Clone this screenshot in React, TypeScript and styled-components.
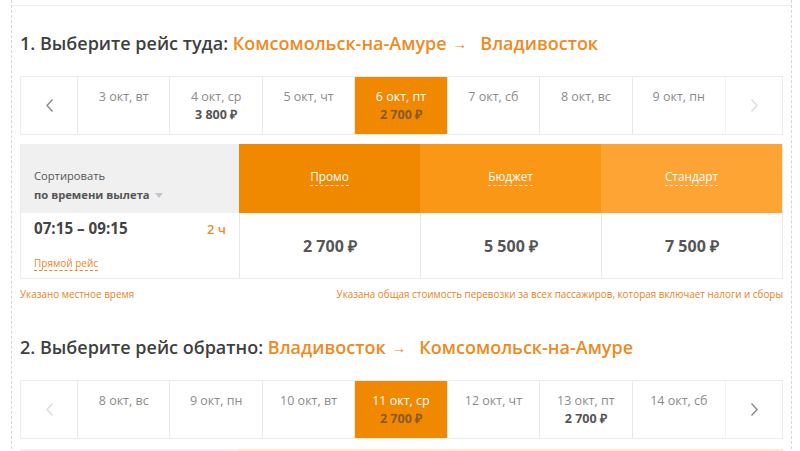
import React from 'react';
import styled, { createGlobalStyle } from 'styled-components';

const GlobalStyle = createGlobalStyle`
  body {
    margin: 0;
    background: #fff;
    font-family: "Open Sans", "Liberation Sans", sans-serif;
    color: #444;
  }
`;

// Page frame with dotted side rules
const Page = styled.div`
  box-sizing: border-box;
  margin-left: 11px;
  width: 781px;
  min-height: 451px;
  padding: 5px 8px 0;
  border-left: 1px dashed #d6d6d6;
  border-right: 1px dashed #d6d6d6;
`;

const Rule = styled.div`
  margin: 0 -8px;
  border-top: 1px solid #ececec;
`;

const Section = styled.section<{ $top: number }>`
  margin-top: ${(p) => p.$top}px;
`;

const Heading = styled.h2`
  margin: 0 0 19px;
  font-size: 18px;
  line-height: 28px;
  font-weight: 600;
  color: #3f3f3f;
  white-space: nowrap;
`;

const Route = styled.span`
  color: #ef8a1f;
`;

const Arrow = styled.span`
  display: inline-block;
  margin: 0 13px 0 1px;
  font-size: 15px;
  font-weight: 700;
  vertical-align: 1px;
`;

// Date strip
const Strip = styled.div`
  display: grid;
  grid-template-columns: 57px repeat(7, 1fr) 57px;
  height: 59px;
  box-sizing: border-box;
  border: 1px solid #ececec;
`;

const NavCell = styled.div<{ $disabled?: boolean; $side: 'left' | 'right' }>`
  display: flex;
  align-items: center;
  justify-content: center;
  color: ${(p) => (p.$disabled ? '#dcdcdc' : '#8a8a8a')};
  ${(p) => (p.$side === 'left' ? 'border-right: 1px solid #e8e8e8;' : 'border-left: 1px solid #f3f3f3;')}
`;

const DateCell = styled.div<{ $active?: boolean }>`
  box-sizing: border-box;
  padding-top: 11px;
  text-align: center;
  background: ${(p) => (p.$active ? '#f08800' : '#fff')};
  border-right: 1px solid #e8e8e8;
  &:nth-child(8) {
    border-right: none;
  }
`;

const DateLabel = styled.div<{ $active?: boolean }>`
  font-size: 12.5px;
  line-height: 18px;
  color: ${(p) => (p.$active ? '#fff' : '#8c8c8c')};
`;

const DatePrice = styled.div<{ $active?: boolean }>`
  font-size: 12.5px;
  line-height: 18px;
  font-weight: 700;
  color: ${(p) => (p.$active ? '#8a5a2c' : '#555')};
`;

// Fares table
const Table = styled.div`
  margin-top: 9px;
  display: grid;
  grid-template-columns: 218px repeat(3, 1fr);
  grid-template-rows: 69px 65px;
  border: 1px solid #ececec;
  border-top: none;
`;

const SortHead = styled.div`
  background: #f0f0f0;
  padding: 22px 0 0 13px;
  font-size: 11.2px;
  line-height: 19px;
  color: #555;
`;

const SortValue = styled.div`
  font-weight: 700;
  display: flex;
  align-items: center;
  gap: 5px;
`;

const Caret = styled.span`
  width: 0;
  height: 0;
  border-left: 4px solid transparent;
  border-right: 4px solid transparent;
  border-top: 5px solid #c4c4c4;
  margin-top: 2px;
`;

const FareHead = styled.div<{ $bg: string }>`
  display: flex;
  align-items: center;
  justify-content: center;
  padding-bottom: 3px;
  background: ${(p) => p.$bg};
`;

const FareName = styled.span`
  color: #fff;
  font-size: 11.8px;
  line-height: 17px;
  border-bottom: 1px dashed rgba(255, 255, 255, 0.8);
`;

const FlightCell = styled.div`
  padding: 3px 13px 0;
  display: flex;
  flex-direction: column;
  background: #fff;
`;

const TimeRow = styled.div`
  display: flex;
  justify-content: space-between;
  align-items: baseline;
`;

const Times = styled.span`
  font-size: 15.2px;
  line-height: 24px;
  font-weight: 700;
  color: #444;
`;

const Duration = styled.span`
  font-size: 13px;
  font-weight: 600;
  color: #ef8a1f;
`;

const Direct = styled.span`
  align-self: flex-start;
  margin-top: 17px;
  font-size: 10px;
  line-height: 13px;
  color: #ee8524;
  border-bottom: 1px dashed #ee8524;
`;

const PriceCell = styled.div`
  display: flex;
  align-items: center;
  justify-content: center;
  border-left: 1px solid #e8e8e8;
  font-size: 16px;
  font-weight: 700;
  color: #555;
`;

const Notes = styled.div`
  display: flex;
  justify-content: space-between;
  padding-top: 8px;
  font-size: 9.9px;
  line-height: 15px;
  color: #ea8226;
`;

const NextTable = styled.div`
  margin-top: 10px;
  display: grid;
  grid-template-columns: 218px 1fr;
  height: 10px;
`;

const Block = styled.div<{ $bg: string }>`
  background: ${(p) => p.$bg};
`;

const Chevron = ({ dir }: { dir: 'left' | 'right' }) => (
  <svg width="9" height="15" viewBox="0 0 9 15" fill="none">
    <path
      d={dir === 'left' ? 'M7.5 1.5 L2 7.5 L7.5 13.5' : 'M1.5 1.5 L7 7.5 L1.5 13.5'}
      stroke="currentColor"
      strokeWidth="1.4"
    />
  </svg>
);

type Day = { label: string; price?: string; active?: boolean };

const DateStrip = ({ days, leftOff, rightOff }: { days: Day[]; leftOff?: boolean; rightOff?: boolean }) => (
  <Strip>
    <NavCell $side="left" $disabled={leftOff}>
      <Chevron dir="left" />
    </NavCell>
    {days.map((d) => (
      <DateCell key={d.label} $active={d.active}>
        <DateLabel $active={d.active}>{d.label}</DateLabel>
        {d.price && <DatePrice $active={d.active}>{d.price}</DatePrice>}
      </DateCell>
    ))}
    <NavCell $side="right" $disabled={rightOff}>
      <Chevron dir="right" />
    </NavCell>
  </Strip>
);

const outbound: Day[] = [
  { label: '3 окт, вт' },
  { label: '4 окт, ср', price: '3 800 ₽' },
  { label: '5 окт, чт' },
  { label: '6 окт, пт', price: '2 700 ₽', active: true },
  { label: '7 окт, сб' },
  { label: '8 окт, вс' },
  { label: '9 окт, пн' },
];

const inbound: Day[] = [
  { label: '8 окт, вс' },
  { label: '9 окт, пн' },
  { label: '10 окт, вт' },
  { label: '11 окт, ср', price: '2 700 ₽', active: true },
  { label: '12 окт, чт' },
  { label: '13 окт, пт', price: '2 700 ₽' },
  { label: '14 окт, сб' },
];

const fares = [
  { name: 'Промо', bg: '#f08800', price: '2 700 ₽' },
  { name: 'Бюджет', bg: '#fb9716', price: '5 500 ₽' },
  { name: 'Стандарт', bg: '#fda435', price: '7 500 ₽' },
];

const App: React.FC = () => (
  <>
    <GlobalStyle />
    <Page>
      <Rule />
      <Section $top={23}>
        <Heading>
          1. Выберите рейс туда:{' '}
          <Route>
            Комсомольск-на-Амуре <Arrow>→</Arrow>Владивосток
          </Route>
        </Heading>
        <DateStrip days={outbound} rightOff />
        <Table>
          <SortHead>
            Сортировать
            <SortValue>
              по времени вылета <Caret />
            </SortValue>
          </SortHead>
          {fares.map((f) => (
            <FareHead key={f.name} $bg={f.bg}>
              <FareName>{f.name}</FareName>
            </FareHead>
          ))}
          <FlightCell>
            <TimeRow>
              <Times>07:15 – 09:15</Times>
              <Duration>2 ч</Duration>
            </TimeRow>
            <Direct>Прямой рейс</Direct>
          </FlightCell>
          {fares.map((f) => (
            <PriceCell key={f.name}>{f.price}</PriceCell>
          ))}
        </Table>
        <Notes>
          <span>Указано местное время</span>
          <span>Указана общая стоимость перевозки за всех пассажиров, которая включает налоги и сборы</span>
        </Notes>
      </Section>
      <Section $top={31}>
        <Heading>
          2. Выберите рейс обратно:{' '}
          <Route>
            Владивосток <Arrow>→</Arrow>Комсомольск-на-Амуре
          </Route>
        </Heading>
        <DateStrip days={inbound} leftOff />
        <NextTable>
          <Block $bg="#f0f0f0" />
          <Block $bg="#fde8d4" />
        </NextTable>
      </Section>
    </Page>
  </>
);

export default App;
